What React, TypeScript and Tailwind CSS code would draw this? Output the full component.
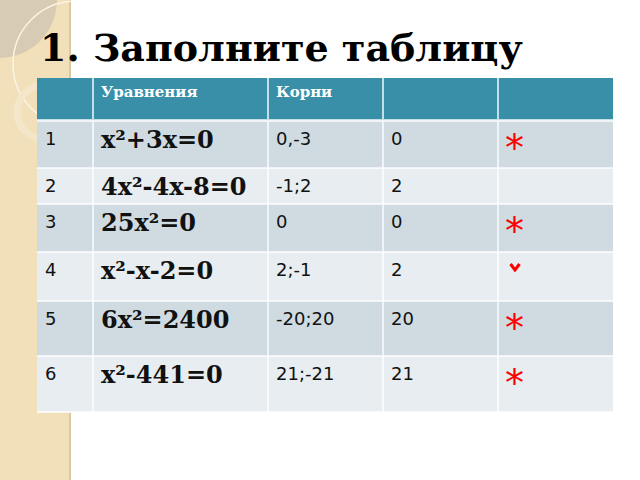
const rows = [
  { n: "1", eq: "x²+3x=0", roots: "0,-3", c: "0", mark: "*", h: "h-[47px]", bg: "bg-[#cfdbe1]" },
  { n: "2", eq: "4x²-4x-8=0", roots: "-1;2", c: "2", mark: "", h: "h-[36px]", bg: "bg-[#e7edf0]" },
  { n: "3", eq: "25x²=0", roots: "0", c: "0", mark: "*", h: "h-[48px]", bg: "bg-[#cfdbe1]" },
  { n: "4", eq: "x²-x-2=0", roots: "2;-1", c: "2", mark: "v", h: "h-[49px]", bg: "bg-[#e7edf0]" },
  { n: "5", eq: "6x²=2400", roots: "-20;20", c: "20", mark: "*", h: "h-[55px]", bg: "bg-[#cfdbe1]" },
  { n: "6", eq: "x²-441=0", roots: "21;-21", c: "21", mark: "*", h: "h-[56px]", bg: "bg-[#e7edf0]" },
];

function Strip() {
  return (
    <div className="absolute left-0 top-0 h-[480px] w-[71px] bg-[#f1e0b9] border-r-2 border-[#dac7a3]">
      <svg width="71" height="480" viewBox="0 0 71 480">
        <path d="M0 0 L57 0 A58 58 0 0 1 0 58 Z" fill="#d7cbb3" />
        <circle cx="76" cy="64" r="63" fill="none" stroke="#fbf4e4" strokeWidth="1.5" />
        <circle cx="44" cy="112" r="27" fill="none" stroke="#f4e6c8" strokeWidth="7" />
      </svg>
    </div>
  );
}

function Mark({ m }: { m: string }) {
  if (m === "*") return <span className="ml-[-1px] text-[38px] leading-none text-[#ff0000]" style={{ fontFamily: "'DejaVu Sans', sans-serif" }}>*</span>;
  if (m === "v")
    return (
      <svg width="12" height="10" viewBox="0 0 12 10" className="ml-[3px] mt-[2px]">
        <path d="M1.5 2 L6 8 L10.5 2" fill="none" stroke="#ff0000" strokeWidth="3" />
      </svg>
    );
  return null;
}

export default function App() {
  return (
    <main className="relative h-[480px] w-[640px] overflow-hidden bg-white">
      <Strip />
      <div className="relative pl-[37px]">
        <h1 className="pt-[24px] pl-[3px] h-[78px] text-[38px] font-bold leading-[48px] text-black" style={{ fontFamily: "'DejaVu Serif', serif" }}>
          1. Заполните таблицу
        </h1>
        <table className="border-collapse table-fixed w-[576px]">
          <colgroup>
            <col className="w-[56px]" />
            <col className="w-[175px]" />
            <col className="w-[115px]" />
            <col className="w-[115px]" />
            <col className="w-[115px]" />
          </colgroup>
          <thead>
            <tr className="h-[42px] bg-[#3a8fa8] text-white text-[15px] font-bold" style={{ fontFamily: "'DejaVu Serif', serif" }}>
              <th className="border-r-2 border-b-[3px] border-white/70"></th>
              <th className="border-r-2 border-b-[3px] border-white/70 px-[7px] pt-[3px] align-top text-left">Уравнения</th>
              <th className="border-r-2 border-b-[3px] border-white/70 px-[7px] pt-[3px] align-top text-left">Корни</th>
              <th className="border-r-2 border-b-[3px] border-white/70"></th>
              <th className="border-b-[3px] border-white/70"></th>
            </tr>
          </thead>
          <tbody>
            {rows.map((r) => (
              <tr key={r.n} className={`${r.h} ${r.bg} text-[#111]`}>
                <td className="border-r-2 border-b-2 border-white/70 px-[8px] pt-[5px] align-top text-[18px] leading-[24px]" style={{ fontFamily: "'DejaVu Sans', sans-serif" }}>{r.n}</td>
                <td className="border-r-2 border-b-2 border-white/70 px-[7px] pt-[3px] align-top text-[24px] font-bold leading-[30px]" style={{ fontFamily: "'DejaVu Serif', serif" }}>{r.eq}</td>
                <td className="border-r-2 border-b-2 border-white/70 px-[7px] pt-[5px] align-top text-[18px] leading-[24px]" style={{ fontFamily: "'DejaVu Sans', sans-serif" }}>{r.roots}</td>
                <td className="border-r-2 border-b-2 border-white/70 px-[7px] pt-[5px] align-top text-[18px] leading-[24px]" style={{ fontFamily: "'DejaVu Sans', sans-serif" }}>{r.c}</td>
                <td className="border-b-2 border-white/70 px-[7px] pt-[7px] align-top">
                  <Mark m={r.mark} />
                </td>
              </tr>
            ))}
          </tbody>
        </table>
      </div>
    </main>
  );
}
